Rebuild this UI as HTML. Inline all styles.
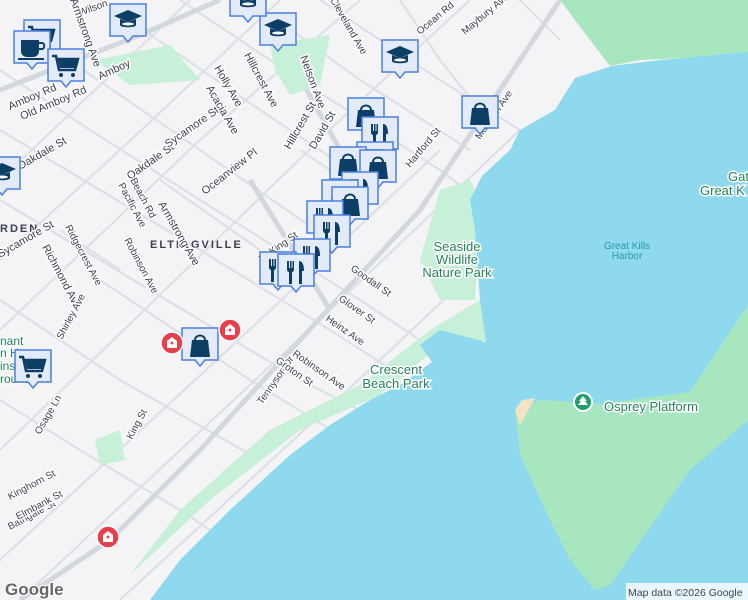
<!DOCTYPE html>
<html><head><meta charset="utf-8"><style>
html,body{margin:0;padding:0;width:748px;height:600px;overflow:hidden;background:#f4f3f5}
svg{display:block}
text{font-family:"Liberation Sans",sans-serif}
.s{font-size:11px;fill:#3c4250;stroke:#fff;stroke-width:3px;paint-order:stroke}
.p{font-size:13px;fill:#24855a;stroke:#fff;stroke-width:3px;paint-order:stroke}
</style></head><body>
<svg width="748" height="600" viewBox="0 0 748 600">
<defs>
<symbol id="mk" viewBox="0 0 40 44">
<path d="M2 2h36v32h-13l-5 6-5-6H2z" fill="#e3ebfb" stroke="#4b7fe0" stroke-width="1.5"/>
</symbol>
<g id="bag"><use href="#mk" width="40" height="44"/><path d="M12 14h16l2 17H10z" fill="#0d3e66"/><path d="M15 14c0-6 10-6 10 0" fill="none" stroke="#0d3e66" stroke-width="2"/></g>
<g id="fork"><use href="#mk" width="40" height="44"/><path d="M11 9v8c0 2 1 3 2 3v12h3V20c1 0 2-1 2-3V9h-1.5v7h-1V9h-1.5v7h-1V9z" fill="#0d3e66"/><path d="M23 9c4 0 5 5 5 10h-2v13h-3z" fill="#0d3e66"/></g>
<g id="cap"><use href="#mk" width="40" height="44"/><path d="M6 14l14-6 14 6-14 6z" fill="#0d3e66"/><path d="M12 17v6c0 3 16 3 16 0v-6l-8 3z" fill="#0d3e66"/><ellipse cx="20" cy="22" rx="6" ry="1.5" fill="#fff"/></g>
<g id="cart"><use href="#mk" width="40" height="44"/><path d="M6 9h4l3 14h16l3-11H11" fill="none" stroke="#0d3e66" stroke-width="2.5"/><path d="M12 13h19l-2 8H14z" fill="#0d3e66"/><circle cx="15" cy="28" r="2" fill="#0d3e66"/><circle cx="27" cy="28" r="2" fill="#0d3e66"/></g>
<g id="cup"><use href="#mk" width="40" height="44"/><path d="M9 11h18v11c0 4-3 6-6 6h-6c-3 0-6-2-6-6z" fill="#0d3e66"/><path d="M27 14h3c3 0 3 6 0 6h-3" fill="none" stroke="#0d3e66" stroke-width="2"/><path d="M6 30h26" stroke="#0d3e66" stroke-width="2"/></g>
<g id="hos"><circle cx="11" cy="11" r="11" fill="#e8404a" stroke="#fff" stroke-width="1.5"/><path d="M6 9l5-4 5 4v7H6z" fill="#fff"/><path d="M9.5 11h3M11 9.5v3" stroke="#e8404a" stroke-width="1.5"/></g>
</defs>
<!-- roads grid -->
<g stroke="#dde1e7" stroke-width="2.2" fill="none">
<path d="M0 330L200 140 360 0M0 450L340 120 470 0M0 560L260 320 440 150M0 260L120 150 280 0M20 600L330 310 520 130M120 600L380 360 560 190M230 560L430 380 480 330M0 180L190 0"/>
<path d="M0 70L90 130 200 200 360 300 480 380M0 130L200 250 330 330 470 420M0 200L150 290 300 380 420 440M100 280L250 380 380 460M0 300L120 380 260 460M0 400L80 450 180 510 240 550M180 0L300 80 440 170 480 200M250 0L360 80 470 150M320 0L440 80 520 130M100 0L260 110 380 190M40 40L200 150 330 240M160 180L260 250M300 150L360 190"/>
<path d="M400 0L440 60 480 110M520 0L560 40M60 230L120 270M400 420L440 380"/>
</g>
<g stroke="#d2d8e0" stroke-width="5" fill="none">
<path d="M20 600L110 540 200 450 300 340 420 210 560 0"/>
<path d="M0 90L140 35 220 0"/>
<path d="M250 180L330 310M290 60L340 150"/>
</g>
<!-- green areas -->
<path d="M560 0H748V55L640 60 610 66 590 40z" fill="#a8e6c0"/>
<path d="M440 190L470 180 480 200 475 300 440 300 420 260z" fill="#c7f0d8"/>
<path d="M130 575L210 500 300 430 380 395 440 345 490 340 480 300 430 330 360 385 270 430 180 510z" fill="#c7f0d8"/>
<path d="M270 45L330 35 320 85 290 95 275 70z" fill="#c7f0d8"/>
<path d="M95 60L170 45 200 80 130 85z" fill="#c7f0d8"/>
<path d="M95 440L120 430 125 460 100 465z" fill="#c7f0d8"/>
<!-- water -->
<path d="M150 600L180 560 230 510 290 455 330 425 370 400 400 385 432 362 420 345 440 330 486 342 480 300 475 230 470 200 482 176 510 150 520 130 555 110 575 78 612 66 660 60 748 52V600z" fill="#8fd9ee"/>
<!-- island -->
<path d="M515 410L540 400 600 404 690 392 748 305V420L690 470 610 585 595 590 570 560 550 520 520 455z" fill="#a8e6c0"/>
<path d="M515 410L522 400 535 398 520 425z" fill="#f2e3c2"/>
<!-- labels -->
<text class="p" x="457" y="251" text-anchor="middle">Seaside</text>
<text class="p" x="457" y="264" text-anchor="middle">Wildlife</text>
<text class="p" x="457" y="277" text-anchor="middle">Nature Park</text>
<text class="p" x="396" y="374" text-anchor="middle">Crescent</text>
<text class="p" x="396" y="388" text-anchor="middle">Beach Park</text>
<text class="p" x="604" y="411">Osprey Platform</text>
<text class="p" x="728" y="181">Gate</text>
<text class="p" x="700" y="195">Great K</text>
<text x="627" y="249" text-anchor="middle" style="font-size:10px;fill:#2c9aa8">Great Kills</text>
<text x="627" y="259" text-anchor="middle" style="font-size:10px;fill:#2c9aa8">Harbor</text>
<text x="150" y="248" style="font-size:11px;letter-spacing:2px;fill:#3c4250;font-weight:bold">ELTINGVILLE</text>
<text x="0" y="232" style="font-size:11px;letter-spacing:2px;fill:#3c4250;font-weight:bold">RDEN</text>
<text class="p" x="0" y="345" style="font-size:12px">nant</text>
<text class="p" x="0" y="357" style="font-size:12px">n H.</text>
<text class="p" x="0" y="370" style="font-size:12px">inson</text>
<text class="p" x="0" y="383" style="font-size:12px">round</text>
<g class="s">
<text transform="translate(158,204) rotate(60)">Armstrong Ave</text>
<text transform="translate(300,57) rotate(70)">Nelson Ave</text>
<text transform="translate(124,240) rotate(62)" font-size="10">Robinson Ave</text>
<text transform="translate(130,180) rotate(-35)">Oakdale St</text>
<text transform="translate(168,148) rotate(-35)">Sycamore St</text>
<text transform="translate(205,195) rotate(-38)">Oceanview Pl</text>
<text transform="translate(214,68) rotate(60)">Holly Ave</text>
<text transform="translate(206,88) rotate(60)">Acacia Ave</text>
<text transform="translate(244,55) rotate(62)">Hillcrest Ave</text>
<text transform="translate(290,150) rotate(-60)">Hillcrest St</text>
<text transform="translate(315,150) rotate(-60)">David St</text>
<text transform="translate(22,120) rotate(-23)">Old Amboy Rd</text>
<text transform="translate(10,110) rotate(-23)">Amboy Rd</text>
<text transform="translate(20,170) rotate(-30)">Oakdale St</text>
<text transform="translate(0,258) rotate(-30)">Sycamore St</text>
<text transform="translate(42,247) rotate(62)">Richmond Ave</text>
<text transform="translate(65,227) rotate(62)" font-size="10">Ridgecrest Ave</text>
<text transform="translate(118,185) rotate(62)" font-size="10">Pacific Ave</text>
<text transform="translate(130,180) rotate(62)" font-size="10">Beach Rd</text>
<text transform="translate(62,340) rotate(-62)" font-size="10">Shirley Ave</text>
<text transform="translate(132,440) rotate(-62)" font-size="10">King St</text>
<text transform="translate(262,405) rotate(-55)" font-size="10">Tennyson Dr</text>
<text transform="translate(292,355) rotate(35)" font-size="10">Robinson Ave</text>
<text transform="translate(275,362) rotate(35)" font-size="10">Groton St</text>
<text transform="translate(325,320) rotate(35)" font-size="10">Heinz Ave</text>
<text transform="translate(338,300) rotate(35)" font-size="10">Glover St</text>
<text transform="translate(350,270) rotate(35)" font-size="10">Goodall St</text>
<text transform="translate(262,262) rotate(-35)" font-size="10">W King St</text>
<text transform="translate(10,530) rotate(-28)" font-size="10">Bathgate St</text>
<text transform="translate(18,520) rotate(-28)" font-size="10">Elmbank St</text>
<text transform="translate(10,500) rotate(-28)" font-size="10">Kinghorn St</text>
<text transform="translate(40,435) rotate(-60)" font-size="10">Osage Ln</text>
<text transform="translate(480,140) rotate(-55)" font-size="10">Mansion Ave</text>
<text transform="translate(410,168) rotate(-50)" font-size="10">Hartford St</text>
<text transform="translate(420,35) rotate(-40)" font-size="10">Ocean Rd</text>
<text transform="translate(465,35) rotate(-40)" font-size="10">Maybury Ave</text>
<text transform="translate(100,80) rotate(-25)">Amboy</text>
<text transform="translate(330,0) rotate(60)" font-size="10">Cleveland Ave</text>
<text transform="translate(80,16) rotate(-20)" font-size="10">Wilson</text>
<text transform="translate(70,0) rotate(70)">Armstrong Ave</text>
</g>
<!-- markers -->
<use href="#cap" x="108" y="2"/><use href="#cap" x="258" y="11"/><use href="#cap" x="380" y="38"/><use href="#cap" x="228" y="-18"/><use href="#cap" x="-18" y="155"/>
<use href="#cart" x="22" y="18"/><use href="#cup" x="12" y="29"/><use href="#cart" x="46" y="47"/><use href="#cart" x="13" y="348"/>
<use href="#bag" x="460" y="94"/>
<use href="#bag" x="346" y="96"/><use href="#fork" x="360" y="115"/><use href="#fork" x="355" y="140"/><use href="#bag" x="345" y="148"/><use href="#bag" x="328" y="145"/><use href="#bag" x="358" y="148"/>
<use href="#fork" x="340" y="170"/><use href="#bag" x="320" y="178"/><use href="#bag" x="330" y="185"/>
<use href="#fork" x="305" y="199"/><use href="#fork" x="312" y="213"/><use href="#fork" x="292" y="237"/><use href="#fork" x="258" y="250"/><use href="#fork" x="276" y="252"/>
<use href="#bag" x="180" y="326"/>
<use href="#hos" x="161" y="332"/><use href="#hos" x="219" y="319"/><use href="#hos" x="97" y="526"/>
<!-- footer -->
<rect x="626" y="583" width="122" height="17" fill="#fff" opacity=".8"/>
<text x="628" y="596" style="font-size:10.5px;fill:#444">Map data ©2026 Google</text>
<text x="5" y="595" style="font-size:17px;font-weight:bold;fill:#666;stroke:#fff;stroke-width:2px;paint-order:stroke">Google</text>
<circle cx="583" cy="402" r="9" fill="#1e9e6a" stroke="#fff" stroke-width="2"/>
<path d="M583 396l-4 5h2l-3 4h10l-3-4h2z" fill="#fff"/>
</svg>
</body></html>
